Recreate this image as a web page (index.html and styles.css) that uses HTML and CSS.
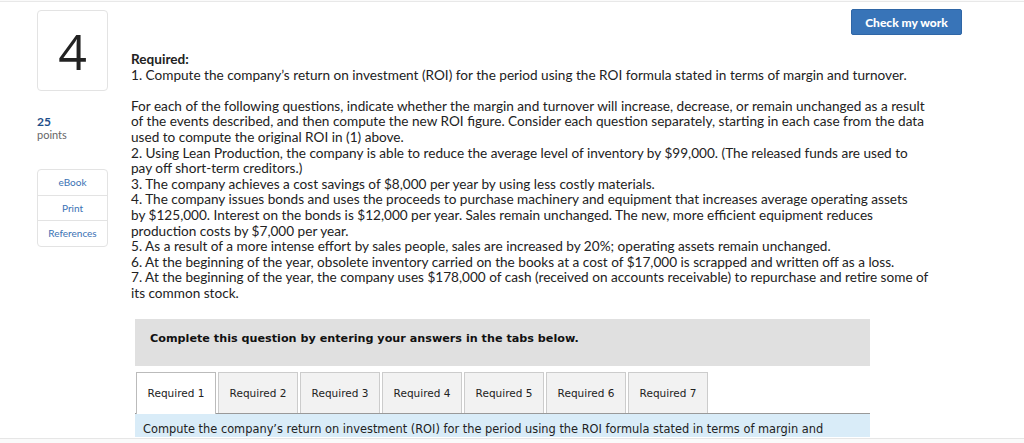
FILE: index.html
```html
<!DOCTYPE html>
<html>
<head>
<meta charset="utf-8">
<link rel="stylesheet" href="styles.css">
</head>
<body>
<div class="page">
  <aside class="side">
    <div class="qnum">4</div>
    <div class="pts"><span class="pts-val">25</span><span class="pts-lbl">points</span></div>
    <div class="tools">
      <div class="tool">eBook</div>
      <div class="tool">Print</div>
      <div class="tool">References</div>
    </div>
  </aside>
  <main class="main">
    <div class="topbar"><button class="check">Check my work</button></div>
    <div class="question">
      <p class="req"><b>Required:</b><br>1. Compute the company’s return on investment (ROI) for the period using the ROI formula stated in terms of margin and turnover.</p>
      <p class="items">For each of the following questions, indicate whether the margin and turnover will increase, decrease, or remain unchanged as a result<br>
      of the events described, and then compute the new ROI figure. Consider each question separately, starting in each case from the data<br>
      used to compute the original ROI in (1) above.<br>
      2. Using Lean Production, the company is able to reduce the average level of inventory by $99,000. (The released funds are used to<br>
      pay off short-term creditors.)<br>
      3. The company achieves a cost savings of $8,000 per year by using less costly materials.<br>
      4. The company issues bonds and uses the proceeds to purchase machinery and equipment that increases average operating assets<br>
      by $125,000. Interest on the bonds is $12,000 per year. Sales remain unchanged. The new, more efficient equipment reduces<br>
      production costs by $7,000 per year.<br>
      5. As a result of a more intense effort by sales people, sales are increased by 20%; operating assets remain unchanged.<br>
      6. At the beginning of the year, obsolete inventory carried on the books at a cost of $17,000 is scrapped and written off as a loss.<br>
      7. At the beginning of the year, the company uses $178,000 of cash (received on accounts receivable) to repurchase and retire some of<br>
      its common stock.</p>
    </div>
    <div class="answer">
      <div class="banner">Complete this question by entering your answers in the tabs below.</div>
      <div class="tabs">
        <div class="tab active">Required 1</div>
        <div class="tab">Required 2</div>
        <div class="tab">Required 3</div>
        <div class="tab">Required 4</div>
        <div class="tab">Required 5</div>
        <div class="tab">Required 6</div>
        <div class="tab">Required 7</div>
      </div>
      <div class="tabbody">Compute the company’s return on investment (ROI) for the period using the ROI formula stated in terms of margin and</div>
    </div>
  </main>
</div>
</body>
</html>
```

FILE: styles.css
```css
html, body {
  margin: 0;
  padding: 0;
  background: #fafafa;
}
.page {
  display: flex;
  background: #fff;
  border-top: 1px solid #e8e8e8;
  border-bottom: 1px solid #e6e6e6;
  height: 438px;
  overflow: hidden;
  box-sizing: border-box;
  margin-top: 1px;
  font-family: Lato, "Liberation Sans", sans-serif;
  color: #222;
}
.side {
  width: 71px;
  margin-left: 37px;
  padding-top: 8px;
  flex: none;
}
.qnum {
  height: 79px;
  border: 1px solid #e3e3e3;
  border-radius: 4px;
  display: flex;
  align-items: center;
  justify-content: center;
  font-family: "Open Sans", sans-serif;
  font-size: 50px;
  font-weight: 400;
  color: #222;
  line-height: 1;
}
.pts {
  display: flex;
  flex-direction: column;
  margin-top: 24px;
  line-height: 13px;
}
.pts-val {
  color: #1f4f8a;
  font-size: 12px;
  font-weight: 700;
}
.pts-lbl {
  color: #666;
  font-size: 11px;
}
.tools {
  margin-top: 28px;
  border: 1px solid #e3e3e3;
  border-radius: 4px;
}
.tool {
  height: 24.7px;
  line-height: 24.7px;
  text-align: center;
  font-size: 10px;
  color: #3a72b4;
}
.tool + .tool {
  border-top: 1px solid #e3e3e3;
}
.main {
  margin-left: 23px;
  flex: 1;
}
.topbar {
  display: flex;
  justify-content: flex-end;
  padding-top: 7px;
  padding-right: 62px;
}
.check {
  width: 111px;
  height: 26px;
  background: #3874b8;
  color: #fff;
  border: 1px solid #2f66a6;
  border-radius: 2px;
  font-family: Lato, sans-serif;
  font-weight: 900;
  font-size: 12px;
  padding: 0;
}
.question {
  width: 840px;
  font-size: 13.6px;
  line-height: 15.6px;
  color: #222;
}
.question p {
  margin: 0;
}
.req {
  margin-top: 17px !important;
}
.items {
  margin-top: 15.6px !important;
}
.answer {
  width: 735px;
  margin-left: 4px;
  margin-top: 17px;
  font-family: Verdana, "DejaVu Sans", sans-serif;
}
.banner {
  background: #e0e0e0;
  height: 47px;
  display: flex;
  align-items: center;
  padding-left: 15px;
  padding-bottom: 8px;
  box-sizing: border-box;
  font-size: 11.2px;
  font-weight: 700;
  color: #111;
}
.tabs {
  display: flex;
  gap: 2px;
  margin-top: 6px;
  padding-left: 1px;
  border-bottom: 1px solid #999;
}
.tab {
  width: 78px;
  height: 40px;
  display: flex;
  align-items: center;
  justify-content: center;
  background: #f2f2f2;
  border: 1px solid #ccc;
  border-bottom: none;
  font-size: 10.5px;
  color: #222;
}
.tab.active {
  background: #fff;
  border-color: #bbb;
  margin-bottom: -1px;
  height: 41px;
}
.tabbody {
  background: #d9ecf8;
  height: 23px;
  padding-left: 8px;
  padding-top: 9px;
  box-sizing: border-box;
  font-size: 11.4px;
  line-height: 12px;
  color: #222;
  white-space: nowrap;
  overflow: hidden;
}
```
